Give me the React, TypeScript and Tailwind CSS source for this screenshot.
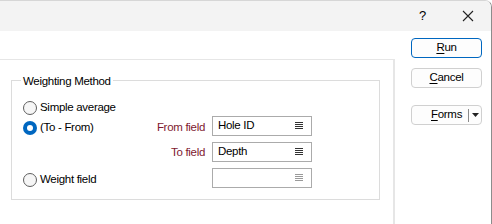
import React from "react";

const ListIcon = ({ faded }: { faded?: boolean }) => (
  <svg width="8" height="8" viewBox="0 0 8 8" className={faded ? "text-[#9a9a9a]" : "text-[#333]"}>
    <rect x="0" y="0" width="8" height="1" fill="currentColor" />
    <rect x="0" y="2" width="8" height="1" fill="currentColor" />
    <rect x="0" y="4" width="8" height="1" fill="currentColor" />
    <rect x="0" y="6" width="8" height="1" fill="currentColor" />
  </svg>
);

const Radio = ({ checked, label }: { checked?: boolean; label: string }) => (
  <div className="mt-[3px] flex items-center gap-[3px]">
    {checked ? (
      <span className="flex h-[14px] w-[14px] items-center justify-center rounded-full bg-[#0067c0]">
        <span className="h-[6px] w-[6px] rounded-full bg-white" />
      </span>
    ) : (
      <span className="h-[14px] w-[14px] rounded-full border border-[#5f5f5f] bg-[#f6f6f6]" />
    )}
    <span>{label}</span>
  </div>
);

const Field = ({ value, faded }: { value?: string; faded?: boolean }) => (
  <div className="flex h-[20px] w-[100px] items-center justify-between border border-[#ababab] bg-white pl-[5px] pr-[8px]">
    <span>{value}</span>
    <ListIcon faded={faded} />
  </div>
);

const Btn = ({ first, rest, primary }: { first: string; rest: string; primary?: boolean }) => (
  <button
    className={`flex h-[20px] w-[71px] items-center justify-center rounded-[4px] border bg-[#fdfdfd] ${
      primary ? "border-[#0067c0]" : "border-[#d0d0d0]"
    }`}
  >
    <span className="underline underline-offset-2">{first}</span>
    {rest}
  </button>
);

export default function App() {
  return (
    <div
      className="flex h-[224px] w-[492px] flex-col overflow-hidden rounded-tr-[7px] border-t border-r border-[#8c8c8c] border-t-[#d6d6d6] bg-white text-[11.5px] tracking-[-0.3px] text-black"
      style={{ fontFamily: '"Liberation Sans", Arial, sans-serif' }}
    >
      {/* title bar */}
      <div className="flex h-[30px] shrink-0 items-center justify-end bg-[#f3f3f3]">
        <span className="mr-[36px] text-[13px]">?</span>
        <svg width="12" height="12" viewBox="0 0 12 12" className="mr-[17px]">
          <path d="M1 1L11 11M11 1L1 11" stroke="#222" strokeWidth="1.1" />
        </svg>
      </div>

      <div className="flex flex-1">
        {/* left panel */}
        <div className="mt-[28px] w-[395px] shrink-0 border-t border-r-2 border-[#e6e6e6]">
          <div className="relative ml-[11px] mt-[20px] w-[369px] border border-[#dcdcdc] pb-[11px] pl-[11px] pt-[15px]">
            <span className="absolute -top-[7px] left-[9px] bg-white px-[2px] leading-[15px]">Weighting Method</span>
            <div className="flex h-[20px] items-center">
              <Radio label="Simple average" />
            </div>
            <div className="flex h-[20px] items-center">
              <div className="w-[130px]">
                <Radio checked label="(To - From)" />
              </div>
              <span className="mt-[3px] w-[52px] text-right text-[#80192f]">From field</span>
              <div className="ml-[7px]">
                <Field value="Hole ID" />
              </div>
            </div>
            <div className="mt-[6px] flex h-[20px] items-center">
              <div className="w-[130px]" />
              <span className="mt-[2px] w-[52px] text-right text-[#80192f]">To field</span>
              <div className="ml-[7px]">
                <Field value="Depth" />
              </div>
            </div>
            <div className="mt-[6px] flex h-[20px] items-center">
              <div className="w-[182px]">
                <Radio label="Weight field" />
              </div>
              <div className="ml-[7px]">
                <Field faded />
              </div>
            </div>
          </div>
        </div>

        {/* buttons */}
        <div className="ml-[16px] mt-[7px] flex flex-col">
          <Btn primary first="R" rest="un" />
          <div className="mt-[10px]">
            <Btn first="C" rest="ancel" />
          </div>
          <div className="mt-[17px] flex h-[20px] w-[71px] items-center rounded-[4px] border border-[#d0d0d0] bg-[#fdfdfd]">
            <span className="ml-[19px]">
              <span className="underline underline-offset-2">F</span>orms
            </span>
            <span className="ml-[6px] h-[13px] w-px bg-[#8a8a8a]" />
            <svg width="7" height="4" viewBox="0 0 7 4" className="ml-[3px]">
              <path d="M0 0H7L3.5 4Z" fill="#222" />
            </svg>
          </div>
        </div>
      </div>
    </div>
  );
}
